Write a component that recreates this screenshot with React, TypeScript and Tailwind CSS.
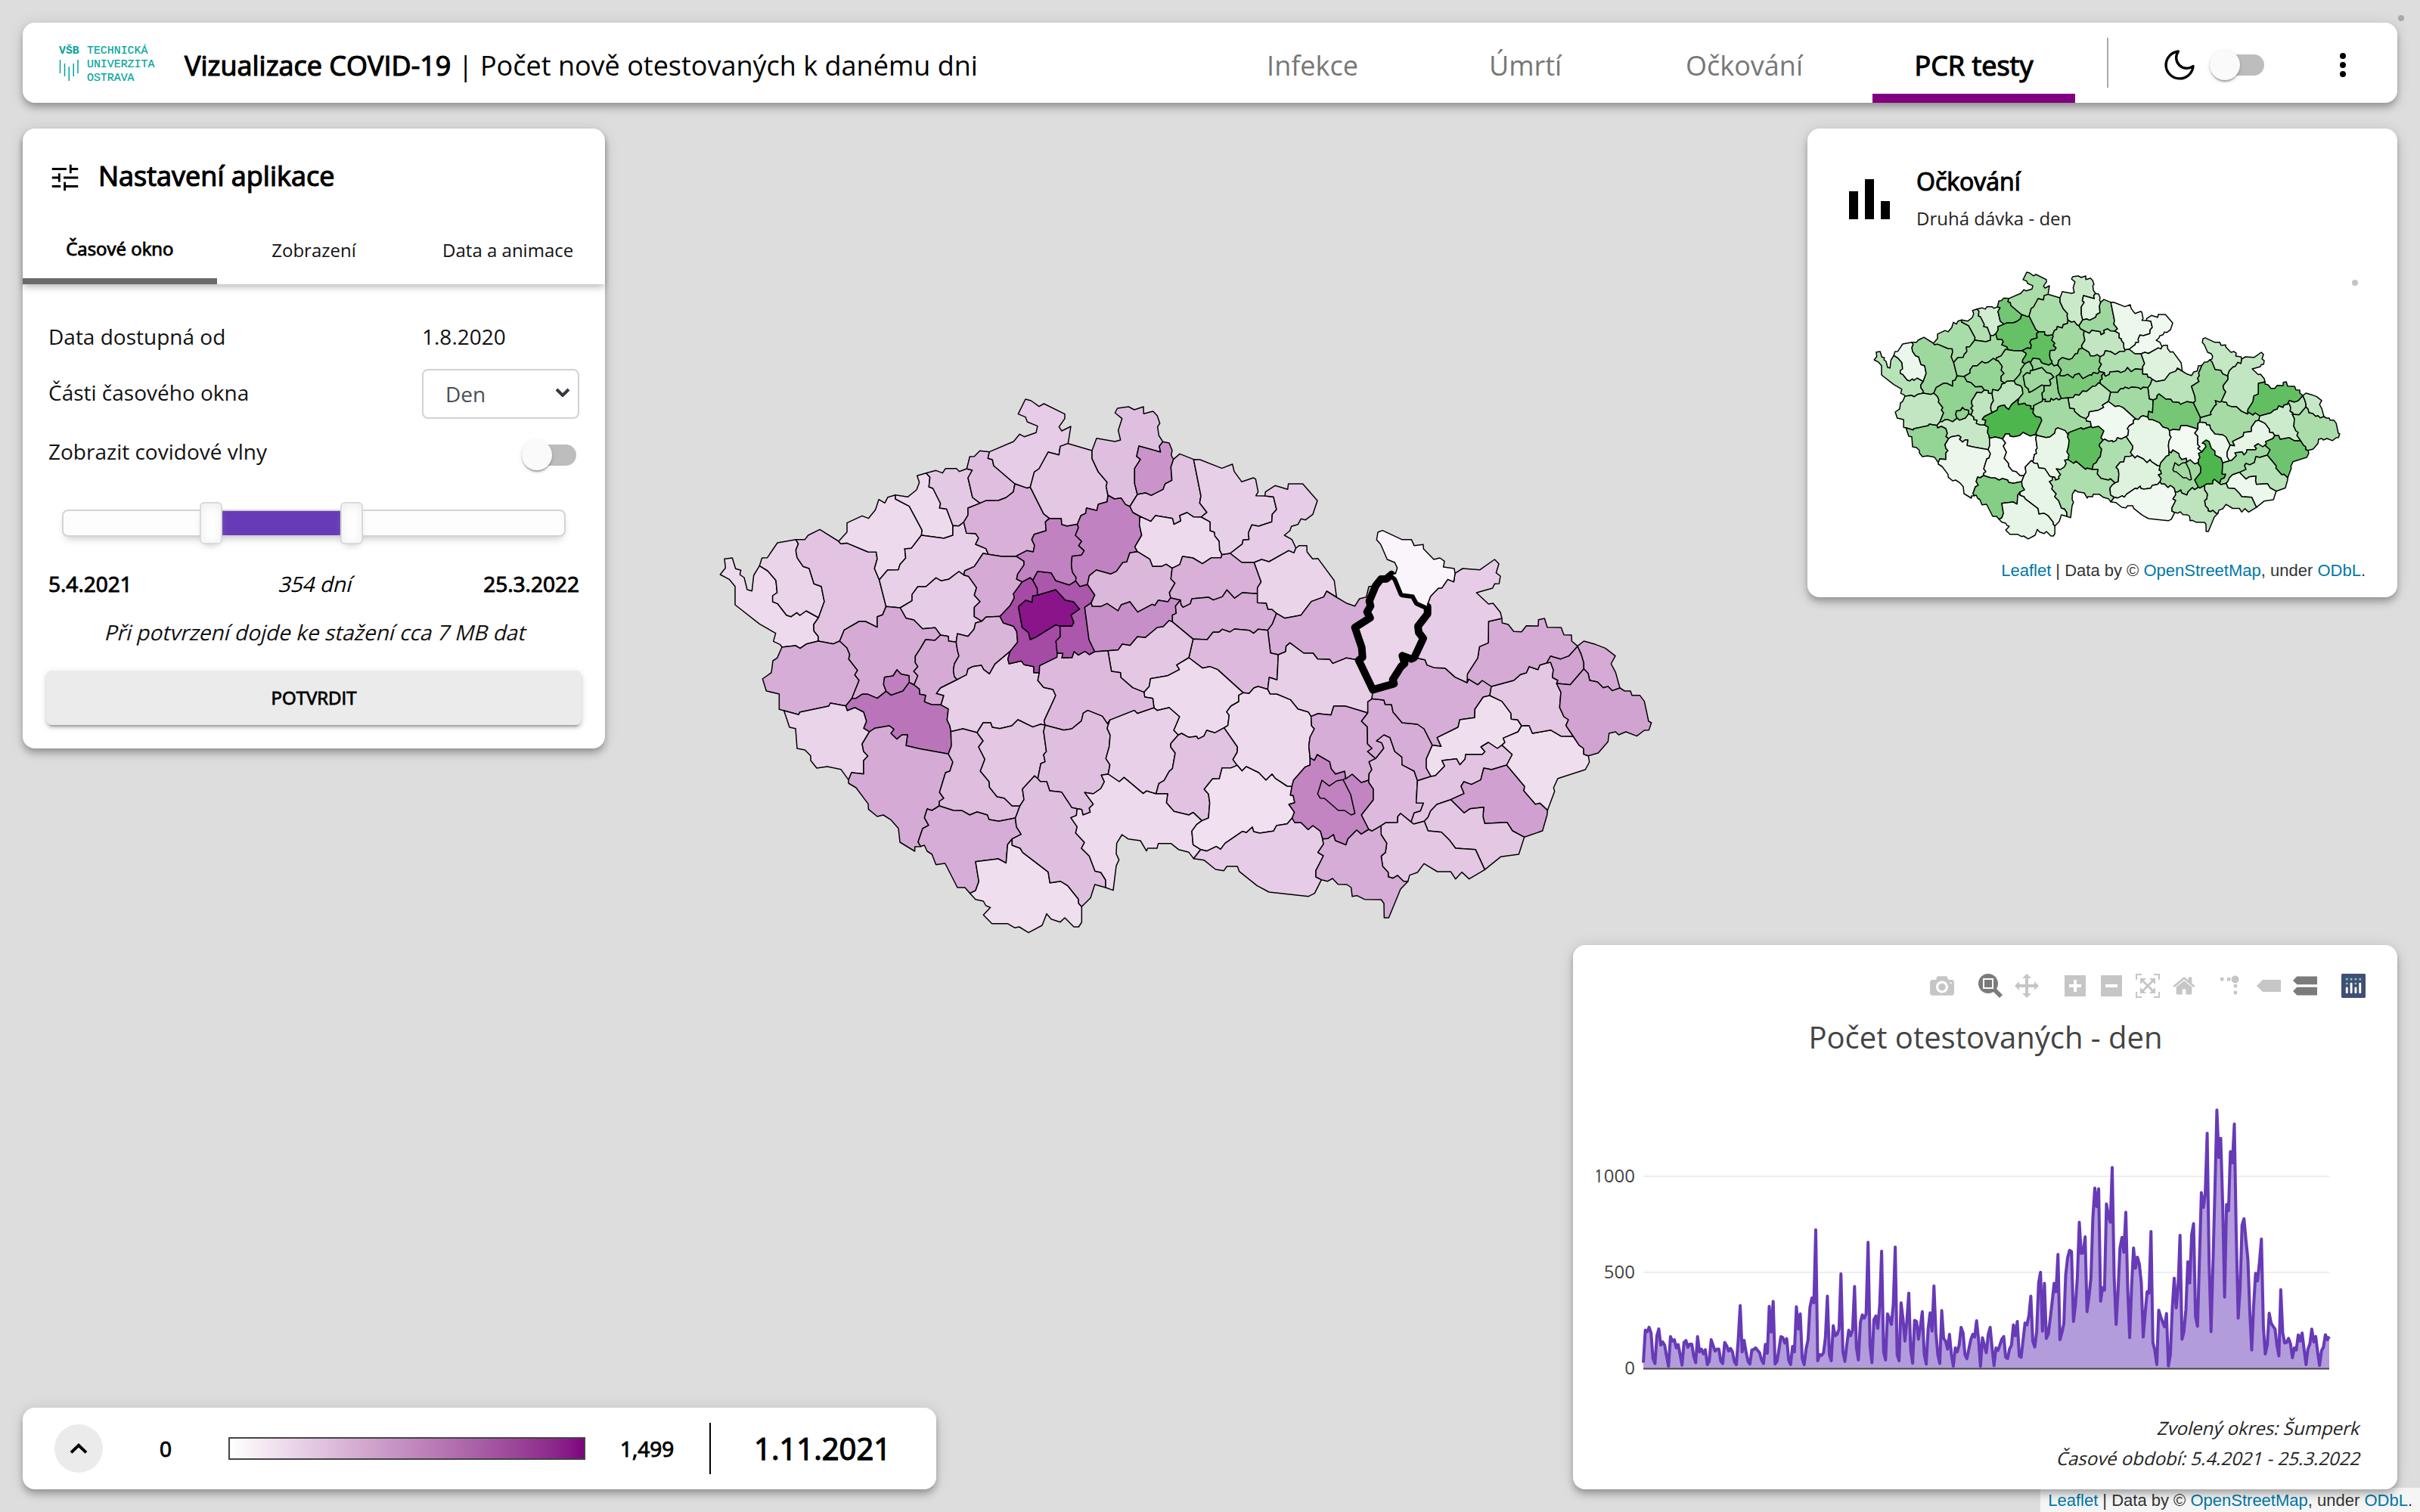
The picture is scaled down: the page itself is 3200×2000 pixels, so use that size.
import type { ReactNode } from "react";

type Point = [number, number];

/* ------------------------------------------------------------------ */
/* District geometry: shared borders, grouped by map sheet             */
/* ------------------------------------------------------------------ */

const SHEET_ORIGIN: Record<string, Point> = {
  a: [0, 0],
  b: [1200, 0],
  c: [2400, 510],
  d: [0, 1110],
  e: [1380, 1050],
};

const BORDERS: Record<string, string> = {
  a1: "193,715 170,753 163,815 144,810 132,762 115,750 119,733 98,727 85,684 54,688 58,724 37,750 73,769 96,797 96,870 193,946 257,983 248,1015 275,1028 282,1038",
  a2: "193,715 225,735 258,773 263,822 245,834 245,858 264,865 300,911 318,917 341,901 353,912 378,894 427,921",
  a3: "193,715 203,684 224,683 264,624 337,611",
  a4: "337,611 347,628 337,653 342,683 366,718 390,726 409,787 438,797 450,857 427,921",
  a5: "427,921 408,948 409,974 426,995 426,1014",
  a6: "282,1038 336,1032 354,1043 380,1025 426,1014",
  a7: "426,1014 486,1025 511,1014",
  a8: "337,611 373,611 386,594 432,571 507,618",
  a9: "507,618 515,628 540,625 623,660 656,661 660,688 649,726 668,771",
  a10: "668,771 695,877",
  a11: "695,877 681,910 660,917 660,959 613,936 588,936 529,970 511,1014",
  a12: "507,618 540,581 540,545 600,517 625,527 653,493 666,452 690,466 702,443 732,434",
  a13: "732,434 732,450 787,479 838,574 835,594",
  a14: "835,594 795,646 769,648 773,684 750,710 744,731 701,732 668,771",
  a15: "732,434 781,442 816,414 827,384 818,358 854,347",
  a16: "854,347 869,364 865,402 881,408 911,468 907,486 935,490 960,556",
  a17: "960,556 960,594 924,606 835,594",
  a18: "854,347 893,337 919,347 931,329 974,329 986,341 1015,330",
  a19: "1015,330 1037,336 1020,366 1038,444 1068,467",
  a20: "1068,467 1020,486 1020,514 1003,542",
  a21: "1003,542 984,557 960,556",
  a22: "1015,330 1027,282 1045,281 1067,259 1105,263",
  a23: "1105,263 1099,289 1117,294 1122,318 1206,390",
  a24: "1206,390 1200,422 1172,444 1141,456 1090,457 1068,467",
  a25: "1003,542 1014,586 1050,587 1062,605 1050,630 1091,647 1101,670",
  a26: "1101,670 1080,666 1045,718 1007,735 1004,752",
  a27: "1004,752 984,738 943,769 914,775 893,763 853,798 821,798 798,829 798,854 751,882",
  a28: "751,882 695,877",
  a29: "1101,670 1153,678 1211,677",
  a30: "1211,677 1242,697 1242,712 1217,748 1213,768 1235,779",
  a31: "1235,779 1200,827 1204,842 1188,872 1147,916",
  a32: "1004,752 1022,757 1054,802 1045,832 1068,857 1045,880 1045,917 1075,935",
  a33: "1075,935 1091,919 1147,916",
  a34: "1075,935 1050,942 1044,967 1020,995 978,985 973,1018",
  a35: "751,882 774,923 805,930 840,965 890,961 911,990",
  a36: "911,990 942,995 943,1014 973,1018",
  a37: "911,990 889,1011 852,1008 830,1045 811,1074 811,1100 821,1115 805,1134 821,1151 806,1187",
  a38: "973,1018 978,1050 984,1073 966,1104 962,1130 966,1155 977,1167",
  a39: "1147,916 1160,942 1200,955 1213,975 1217,1018 1187,1055",
  a40: "977,1167 1014,1148 1020,1125 1039,1115 1073,1110 1082,1127 1105,1144 1127,1105 1187,1055",
  a41: "1187,1055 1178,1085 1183,1104 1232,1093 1243,1108 1281,1115 1281,1139 1303,1139",
  a42: "1105,263 1201,222 1225,193 1243,203 1290,187 1296,161 1255,144 1248,125 1219,113 1248,54 1270,60 1302,83 1321,72 1404,113 1404,131 1381,164 1392,180 1428,162 1417,230",
  b0: "217,230 186,241 181,275 138,264 102,330 83,343 67,403",
  b00: "67,403 54,407 6,390",
  b1: "67,403 120,509 143,527",
  b2: "217,230 312,258",
  b3: "312,258 312,290 337,343 372,384 368,400 375,435",
  b4: "375,435 372,461 337,471 331,496 290,486 287,507 268,516 254,550",
  b5: "254,550 213,557 192,551 190,527 143,527",
  b6: "143,527 127,541 130,576 83,590 73,611 84,634 79,660 53,655 11,677",
  b7: "312,258 330,209 403,222 425,216 416,178 431,131 403,108 413,90 457,84 480,96 516,84 517,112 554,102 571,120 581,150 572,163 577,198 593,223",
  b8: "593,223 579,241 584,264 498,240 489,281 504,293 481,329 481,389 492,432",
  b9: "492,432 462,480",
  b10: "462,480 445,472 427,446 401,450 375,435",
  b11: "593,223 618,228 630,257 626,276 635,293",
  b12: "635,293 625,323 629,376 602,390 594,412 547,436 524,426 492,432",
  b13: "635,293 660,271 715,293",
  b14: "715,293 744,438 739,466 768,503 745,522",
  b15: "745,522 714,521 689,504 660,516 664,537 637,551 631,527 564,516 545,539 502,519",
  b16: "502,519 474,504 462,480",
  b17: "502,519 500,553 509,594 482,640 492,659",
  b18: "715,293 740,294 827,328 869,312 876,341 906,382 952,366 961,371 971,422 962,437 998,438",
  b19: "998,438 1032,442 1044,492 1027,511 1025,541 973,558 946,553 932,585 935,611 911,613 908,629 860,666",
  b20: "745,522 780,541 780,576 797,582 799,597 816,618 818,653 827,671",
  b21: "827,671 860,666",
  b22: "998,438 1000,422 1038,397 1088,412 1091,390 1148,390 1206,457 1188,511 1159,533 1141,529 1129,551 1103,559 1097,576 1075,594 1105,611 1121,645",
  b23: "1121,645 1113,664 1092,655 1014,699 985,690 955,702",
  b24: "860,666 906,702 955,702",
  b25: "1121,645 1134,635 1164,635 1165,660 1187,688 1208,686 1273,774 1282,840",
  b26: "955,702 983,779 968,803 968,826",
  b27: "968,826 968,862 1003,863 1010,887 1026,888 1044,904",
  b28: "1044,904 1076,923 1141,911 1182,857 1231,839 1243,816 1282,840",
  b29: "827,671 824,683 786,683 750,707 712,684 671,678 660,710 630,725",
  b30: "630,725 606,709 587,718 552,718 541,689 492,659",
  b31: "492,659 462,664 450,700 434,702 409,737 386,748 329,732 301,755 294,789",
  b32: "254,550 258,564 246,594 271,618 259,635 281,655 270,673 233,677 230,712 234,740 249,762 247,775",
  b33: "247,775 264,797 294,789",
  b34: "247,775 222,791 168,774 150,743 96,737 77,772",
  b35: "77,772 67,762 35,779",
  b36: "77,772 95,806 95,832",
  b37: "95,832 77,835 74,860 49,852 20,878 35,960 60,980 67,1008 90,998 168,949 185,955",
  b38: "95,832 168,810 206,851 239,858 263,887 229,911 240,940 232,955 185,955",
  b39: "185,955 186,997 169,1014 174,1062",
  b40: "174,1062 173,1078 104,1112 103,1139",
  b41: "174,1062 196,1063 192,1081 233,1080 241,1056 258,1070 284,1055 301,1068 323,1056",
  b42: "323,1056 300,1008 283,880 309,862",
  b43: "309,862 323,831 294,789",
  b44: "309,862 312,876 346,877 372,865 415,894 428,870 462,858 493,899 551,868 561,873 575,852 613,858 624,842",
  b45: "630,725 625,767 641,784 619,822 624,842",
  b46: "624,842 663,851",
  b47: "663,851 665,870 673,880 702,866 708,846 774,840 793,851 829,838 847,811 877,844 908,822 968,826",
  b48: "663,851 643,875 646,904 631,911 631,938",
  b49: "375,1052 416,1049 432,1026 463,1031 492,997 523,1000 571,960 594,957 618,932 631,938",
  b58: "323,1056 375,1052",
  b50: "631,938 713,1006",
  b51: "713,1006 769,1008 792,979 815,979 829,967 859,978 877,966 935,971 953,983 971,967 1009,971",
  b52: "1044,904 1027,947 1009,971",
  b53: "1009,971 1020,1061 1051,1068",
  b54: "1051,1068 1080,1056 1082,1034 1097,1021 1152,1062 1189,1062 1207,1085 1255,1087 1267,1103 1320,1081 1370,1090",
  b55: "1051,1068 1046,1168 1015,1158 1009,1205",
  b56: "713,1006 696,1080",
  e51: "516,30 570,71 599,65 630,77 732,169",
  e1: "516,30 468,59 479,77 433,101 364,113 359,144 338,167",
  e2: "195,2 209,84 245,89 246,108 293,149 338,167",
  e3: "338,167 341,186 373,191 378,229",
  e4: "-54,298 20,317 52,312 90,281 97,250 115,239 173,262 193,292 203,277",
  e5: "203,277 300,239 312,251 378,229",
  e6: "378,229 390,239 438,228 479,264 456,318 474,337",
  e7: "474,337 487,330 516,346 547,342 553,352 576,341 587,318 619,328 656,308",
  e8: "656,308 671,299 676,258 666,245 683,222 714,204 714,179 732,169",
  e9: "732,169 755,172 774,150 791,144 829,155",
  e10: "829,155 838,173 865,174 920,197 949,233 990,245 1001,263",
  e11: "1001,263 1028,252 1080,257 1091,222 1134,221 1226,249",
  e12: "1001,263 1003,300 1014,312 997,345 992,380 997,427",
  e13: "997,427 997,456 977,464 931,517 925,541",
  e14: "656,308 709,384 708,405 691,434 708,457",
  e15: "708,457 727,479 744,462 793,486 822,516 846,492 859,509 906,540 925,541",
  e16: "474,337 445,370 444,384 462,408 451,470 438,481 418,517 397,529 386,570",
  e17: "386,570 432,570 427,605 457,640 516,654 533,644 568,677",
  e18: "568,677 594,666 599,606 594,571 577,552 610,511 637,510 648,467 684,467 708,457",
  e19: "203,277 192,310 204,337 200,384 187,430 203,455 196,492",
  e20: "196,492 240,522 259,505 335,569 348,559 386,570",
  e21: "196,492 169,496 181,522 167,549 137,570 103,565 137,611 121,627 125,643 96,654 91,632 73,629",
  e23: "73,629 70,656 48,665 73,701 67,725 102,763 90,786 121,817 144,877 167,882 186,912 186,942",
  e24: "186,942 216,953 228,856 239,832 228,808 230,766 251,732 275,749 324,756 348,797 353,786 390,786 395,767 445,767 475,791 516,802 535,827",
  e25: "568,677 547,692 528,718 533,772 563,791",
  e26: "563,791 535,827",
  e27: "563,791 588,797 625,779 642,790 660,766 729,719 744,724 768,702 773,720 797,726 852,718 864,696 906,689 926,666",
  e28: "925,541 919,575 930,577 936,605 913,612 935,643 926,666",
  e29: "926,666 936,684 961,684 989,712 1008,696 1038,718 1047,749",
  e30: "1047,749 1050,770 1028,803 1050,816 1020,875 1020,900 1042,911",
  e31: "535,827 576,833 622,870 655,875 667,858 709,858 716,878 786,934 834,960 991,977 1015,965 1042,911",
  e32: "1042,911 1067,917 1086,906 1108,929 1143,930 1160,942 1164,977 1183,974 1213,989 1279,990 1290,1005 1291,1062 1309,1062 1356,948 1385,918",
  e33: "1385,918 1368,917 1344,894 1326,905 1307,899 1307,882 1285,858 1279,817 1296,803 1301,766 1279,732 1278,697",
  e34: "1047,749 1067,748 1090,732 1097,756 1139,773 1147,749 1182,714 1200,730 1230,711",
  e35: "1230,515 1230,525 1248,551 1248,594 1201,654 1230,711",
  e36: "1230,711 1242,718 1278,697",
  e37: "1278,697 1296,685 1344,684 1345,660 1356,648 1398,682",
  e38: "997,427 1014,437 1025,414 1075,443 1081,470 1098,491 1134,480 1139,510 1164,492 1200,525 1230,515",
  e39: "1044,516 1073,539 1102,519 1128,514 1139,508 1128,514 1158,573 1175,648 1160,654 1134,636 1109,636 1054,588 1037,587 1027,570 1044,516",
  e40: "1226,249 1201,282 1224,304 1225,372 1243,390 1225,402 1257,430",
  e41: "1257,430 1231,443 1242,474 1231,491 1230,515",
  e42: "1226,249 1226,205 1243,193",
  e43: "1257,430 1289,389 1281,368 1260,360 1290,336 1314,347 1333,402 1361,424 1362,455 1410,480 1423,518",
  e44: "1243,193 1246,160",
  e50: "91,1018 126,983 143,930 186,942",
  c45: "170,580 226,697",
  c49: "403,1058 398,1146 427,1147 415,1178 390,1186 378,1222",
  c1: "300,240 316,236 323,214 313,192 283,180 257,120 241,102 246,72 264,65 341,101 379,101 390,125 426,121 427,138 468,180 492,174 510,187 506,210 549,216 552,235",
  c2: "552,235 547,269 523,259 500,293 486,294 455,326 443,358 443,368",
  c3: "300,240 318,255 343,316 388,322 403,350 443,368",
  c4: "238,283 258,258 280,257 300,240",
  c5: "82,330 120,353 155,365 173,336 200,329 210,288 238,283",
  c6: "238,283 212,345 217,365 203,388 215,412 155,450 182,530 185,568 170,580",
  c7: "443,368 443,396 405,445 408,470 426,493 390,570",
  c8: "390,570 378,575 343,562 352,593 338,605 305,657 310,673 226,697",
  c9: "390,570 408,573 433,578 441,599 471,610 512,611 552,647 600,669",
  c10: "552,235 582,216 651,221 709,180 726,197 715,233 732,246 727,276 709,277 701,294 637,312 685,357 703,354 732,390 738,414",
  c11: "738,414 685,426 684,511 649,526 642,571 601,635 600,669",
  c12: "738,414 739,432 763,438 785,466 816,467 835,443 882,444 883,419 907,414 918,449 973,450 984,479 1014,480 1015,504 1038,524",
  c13: "600,669 606,655 642,677 660,660 696,684",
  c14: "696,684 785,660 811,637 835,630 846,605 881,617 888,599 915,591",
  c15: "915,591 931,563 971,575 1003,563 1038,524",
  c16: "915,591 931,588 942,618 938,648 960,660 955,672",
  c17: "955,672 1009,677 1063,614",
  c18: "1038,524 1053,557 1063,590 1063,614",
  c19: "1038,524 1063,504 1109,517 1148,532 1188,563 1171,594 1189,628 1206,690",
  c20: "1063,614 1080,632 1086,660 1117,666 1140,689 1159,684 1176,701 1206,690",
  c21: "1206,690 1225,702 1248,702 1254,719 1285,719 1303,743 1320,822 1331,828 1321,857 1303,858 1273,881 1230,864 1201,876 1189,864 1163,870 1159,903 1120,948 1081,959",
  c22: "955,672 972,707 967,767 984,804 1002,816 992,839 1021,882",
  c23: "1021,882 1044,917 1062,930 1063,953 1081,959",
  c24: "696,684 690,720",
  c25: "690,720 738,743 774,791 775,814 800,816 816,840",
  c26: "816,840 846,839 859,870 931,857 972,881 1021,882",
  c27: "690,720 664,726 631,774 630,808 571,816 564,846 481,887 497,922 462,917",
  c28: "222,733 270,738 275,755 300,756 306,785 342,828 403,834 429,852 462,917",
  c29: "462,917 438,972 438,1008 457,1041",
  c30: "457,1041 403,1058",
  c31: "457,1041 474,1038 511,1000 500,978 558,971 571,995 592,972 594,954 660,954 671,943 655,924 684,906 720,930 738,917",
  c32: "738,917 750,906 743,889 802,864 816,840",
  c33: "738,917 779,954 757,996",
  c34: "757,996 697,1014 666,1008 654,1055 617,1073 587,1062 576,1080 588,1109 535,1133",
  c35: "757,996 828,1081 825,1098 871,1151 889,1147 919,1175",
  c36: "1081,959 1085,984 1069,1014 960,1049 943,1086 947,1100 919,1175",
  c40: "378,1222 388,1230 430,1219",
  c41: "430,1219 445,1203 455,1178 480,1152 535,1133",
  c42: "430,1219 445,1257 498,1262 530,1294 554,1326 633,1331 670,1411",
  c43: "919,1175 917,1195 899,1257 827,1282",
  c46: "535,1133 588,1186 612,1169 666,1163 663,1200 670,1228 758,1223 780,1257 827,1282",
  c47: "827,1282 805,1350 733,1360 670,1411",
  c48: "365,1458 372,1433 403,1422 429,1387 482,1419 535,1419 554,1448 579,1421 608,1448 670,1411",
  d1: "282,-72 263,-29 246,-18 240,29 205,54 220,102 271,114 271,175 290,180",
  d2: "511,-96 540,-69 551,-42 547,-25 582,20 571,38 588,60 559,132",
  d3: "559,132 535,161",
  d4: "535,161 474,150 468,162 353,186 348,196 290,180",
  d5: "559,132 576,131 600,115 623,115 660,131 695,103",
  d6: "695,103 685,75 689,47 723,42 738,18 755,35 786,41 787,68",
  d7: "695,103 715,119 762,102 787,68",
  d8: "787,68 806,78",
  d9: "806,78 827,95 828,115 852,119 847,145 876,156 913,157",
  d10: "977,57 911,90 895,112 924,120 913,157",
  d11: "913,157 942,173 937,217 948,240 952,263",
  d12: "952,263 954,320 942,352",
  d13: "942,352 825,331 774,319 780,276 758,276 738,293 714,270 726,254 708,240 650,250 629,264",
  d14: "629,264 606,250 617,222 606,186 571,168 541,180 535,161",
  d15: "629,264 600,312 606,342 623,360 606,378 606,431 558,426 546,455",
  d16: "290,180 312,246 336,251 342,330 373,336 396,359 396,378 420,408 462,402 516,413 546,455",
  d17: "546,455 546,468 576,486 624,550 625,571 660,600 684,594 715,614 744,647 750,702 809,738 809,720 832,719",
  d18: "906,558 877,576 858,570 847,605 864,635 840,648 822,701 832,719",
  d19: "942,352 960,384 948,420 931,426 907,504 924,528 906,540 906,558",
  d20: "906,558 962,576 997,577 1027,594 1056,582 1097,594 1103,612 1142,619 1208,606",
  d21: "952,263 1000,252 1056,267",
  d22: "1056,267 1080,300 1062,324 1087,373 1069,420 1104,462 1105,484 1135,521 1164,527 1195,558 1226,558",
  d23: "1226,558 1208,606",
  d24: "1056,267 1080,228 1110,228 1116,246 1146,251 1194,240 1218,216 1277,245 1308,234 1326,238",
  d25: "1303,29 1297,60 1320,88 1357,96 1368,120 1322,220 1326,238",
  d26: "1326,238 1320,262 1331,342 1320,355 1326,383 1309,390 1297,450",
  d27: "1297,450 1284,439 1236,491 1242,533 1226,558",
  d28: "1208,606 1212,641 1231,671 1195,689",
  d29: "1195,689 1177,712 1171,785 1140,768 1050,779 1063,858 1050,894 1028,905",
  d30: "1195,689 1195,714 1227,726 1237,743 1338,820 1345,863 1387,857 1416,875 1458,928 1459,945 1471,958",
  d31: "832,719 847,714 858,738 877,750 893,791 929,786 978,882 1008,882 1028,905",
  d32: "1028,905 1050,929 1081,936 1091,954 1109,961 1081,991 1115,1025 1177,1025 1206,1042 1223,1038 1260,1061 1314,1032 1332,986 1350,1007 1386,1019 1404,1002 1440,1038 1459,1038 1471,1020 1471,958",
  d34: "1453,569 1432,565 1391,503 1344,498 1332,461 1307,461 1297,450",
};

/* name, borders round the district, PCR tests (0..1), second dose (0..1) */
const DISTRICTS: [string, string, number, number][] = [
  ["Cheb", "a1 a6 a5 a2", 0.14, 0.28],
  ["Sokolov", "a3 a4 a2", 0.17, 0.08],
  ["Karlovy Vary", "a8 a9 a10 a11 a7 a5 a4", 0.23, 0.38],
  ["Chomutov", "a12 a13 a14 a9", 0.145, 0.34],
  ["Most", "a15 a16 a17 a13", 0.14, 0.31],
  ["Teplice", "a18 a19 a20 a21 a16", 0.21, 0.18],
  ["Ústí nad Labem", "a22 a23 a24 a19", 0.25, 0.55],
  ["Děčín", "a42 b0 b00 a23", 0.2, 0.34],
  ["Louny", "a14 a17 a21 a25 a26 a27 a28 a10", 0.18, 0.36],
  ["Litoměřice", "a20 a25 a29 b6 b1 b00 a24", 0.31, 0.6],
  ["Rakovník", "a27 a32 a34 a36 a35", 0.2, 0.42],
  ["Kladno", "a29 a30 a31 a33 a32 a26", 0.33, 0.37],
  ["Tachov", "a6 a7 d2 d3 d4 d1", 0.32, 0.24],
  ["Plzeň-sever", "a11 a28 a35 a37 d8 d6 d5 d2", 0.33, 0.43],
  ["Plzeň-město", "d6 d7", 0.5, 0.43],
  ["Rokycany", "a36 a38 d10 d9 a37", 0.33, 0.25],
  ["Beroun", "a33 a39 a40 a38 a34", 0.29, 0.26],
  ["Plzeň-jih", "d5 d7 d8 d9 d11 d12 d13 d14 d3", 0.54, 0.22],
  ["Domažlice", "d4 d14 d15 d16", 0.17, 0.42],
  ["Klatovy", "d15 d13 d19 d18 d17", 0.33, 0.08],
  ["Příbram", "d10 a40 a41 d25 d24 d21 d11", 0.19, 0.7],
  ["Praha-západ", "a31 a39 a41 b40 b39 b37 b36 b35", 0.71, 0.42],
  ["Praha", "b37 b38", 0.92, 0.38],
  ["Praha-východ", "b34 b36 b38 b39 b41 b42 b43 b33", 0.66, 0.42],
  ["Mělník", "b6 b5 b32 b34 b35 a30", 0.49, 0.62],
  ["Česká Lípa", "b0 b2 b3 b4 b5 b1", 0.22, 0.34],
  ["Liberec", "b7 b8 b9 b10 b3", 0.25, 0.21],
  ["Jablonec nad Nisou", "b11 b12 b8", 0.42, 0.13],
  ["Semily", "b13 b14 b15 b16 b9 b12", 0.24, 0.38],
  ["Trutnov", "b18 b19 b21 b20 b14", 0.19, 0.07],
  ["Náchod", "b22 b23 b24 b19", 0.2, 0.06],
  ["Mladá Boleslav", "b10 b16 b17 b31 b33 b32 b4", 0.49, 0.37],
  ["Jičín", "b15 b20 b29 b30 b17", 0.145, 0.24],
  ["Nymburk", "b30 b45 b44 b43 b31", 0.28, 0.46],
  ["Kolín", "b44 b46 b48 b49 b58 b42", 0.44, 0.53],
  ["Hradec Králové", "b29 b21 b24 b26 b47 b46 b45", 0.31, 0.31],
  ["Pardubice", "b47 b27 b52 b51 b50 b48", 0.32, 0.41],
  ["Rychnov nad Kněžnou", "b23 b25 b28 b27 b26", 0.17, 0.13],
  ["Ústí nad Orlicí", "b28 c5 c6 b54 b53 b52", 0.32, 0.27],
  ["Chrudim", "b51 b53 b55 e9 e51 b56", 0.27, 0.36],
  ["Kutná Hora", "b49 b50 b56 e1 e2", 0.22, 0.27],
  ["Havlíčkův Brod", "e1 e51 e8 e7 e6 e3", 0.14, 0.06],
  ["Benešov", "d25 b40 b41 b58 e2 e3 e5 e4", 0.27, 0.36],
  ["Strakonice", "d21 d22 d23 d20 d19 d12", 0.26, 0.06],
  ["Písek", "d22 d24 d26 d27", 0.22, 0],
  ["Tábor", "d26 e4 e19 e21 d34", 0.25, 0.09],
  ["Pelhřimov", "e5 e6 e16 e20 e19", 0.18, 0.63],
  ["Jihlava", "e7 e14 e18 e17 e16", 0.24, 0.32],
  ["Žďár nad Sázavou", "e9 e10 e12 e13 e15 e14 e8", 0.145, 0.1],
  ["Svitavy", "b55 b54 c45 e44 e42 e11 e10", 0.19, 0.54],
  ["Prachatice", "d20 d28 d29 d31 d18", 0.32, 0.48],
  ["Český Krumlov", "d30 d32 d29", 0.13, 0.1],
  ["České Budějovice", "d27 d34 e23 e50 d30 d28 d23", 0.25, 0.1],
  ["Jindřichův Hradec", "e21 e20 e17 e25 e26 e24 e23", 0.145, 0.32],
  ["Třebíč", "e18 e15 e28 e27 e25", 0.12, 0.13],
  ["Znojmo", "e27 e29 e30 e31 e26", 0.2, 0.06],
  ["Brno-venkov", "e38 e35 e34 e29 e28 e13", 0.48, 0.37],
  ["Brno-město", "e39", 0.49, 0.37],
  ["Blansko", "e11 e40 e41 e38 e12", 0.32, 0.05],
  ["Vyškov", "e43 c49 e37 e36 e35 e41", 0.27, 0.7],
  ["Prostějov", "e42 c28 c29 c30 e43 e40", 0.32, 0.08],
  ["Olomouc", "c8 c9 c13 c24 c27 c28 e44", 0.32, 0.35],
  ["Přerov", "c27 c25 c32 c31 c29", 0.13, 0.1],
  ["Kroměříž", "c31 c33 c34 c41 c40 c49 c30", 0.23, 0.38],
  ["Zlín", "c35 c43 c46 c34", 0.37, 0.28],
  ["Vsetín", "c26 c23 c36 c35 c33 c32", 0.13, 0.57],
  ["Uherské Hradiště", "c41 c46 c47 c42", 0.22, 0.07],
  ["Hodonín", "c40 c42 c48 e33 e37", 0.22, 0.26],
  ["Břeclav", "e36 e33 e32 e30 e34", 0.32, 0.26],
  ["Nový Jičín", "c14 c16 c22 c26 c25 c24", 0.22, 0.2],
  ["Ostrava", "c15 c18 c17 c16", 0.36, 0.28],
  ["Karviná", "c19 c20 c18", 0.33, 0.22],
  ["Frýdek-Místek", "c20 c21 c23 c22 c17", 0.36, 0.33],
  ["Opava", "c12 c15 c14 c13 c11", 0.33, 0.62],
  ["Bruntál", "c10 c11 c9 c7 c2", 0.2, 0.24],
  ["Šumperk", "c4 c3 c7 c8 c45 c6", 0.165, 0.41],
  ["Jeseník", "c1 c2 c3", 0.04, 0.23],
];

const borderPoints = (id: string): Point[] => {
  const [dx, dy] = SHEET_ORIGIN[id[0]];
  return BORDERS[id].split(" ").map((pair) => {
    const [x, y] = pair.split(",").map(Number);
    return [x + dx, y + dy];
  });
};

const gap = (p: Point, q: Point) => Math.hypot(p[0] - q[0], p[1] - q[1]);

/* Joins borders end to end, turning each one to meet the previous. */
const ringPath = (ids: string) => {
  const lines = ids.split(" ").map(borderPoints);
  let ring = [...lines[0]];
  if (lines.length > 1) {
    const next = lines[1];
    const reach = (p: Point) => Math.min(gap(p, next[0]), gap(p, next[next.length - 1]));
    if (reach(ring[0]) < reach(ring[ring.length - 1])) ring.reverse();
  }
  for (const line of lines.slice(1)) {
    const end = ring[ring.length - 1];
    const turned = gap(end, line[0]) <= gap(end, line[line.length - 1]) ? line : [...line].reverse();
    ring = ring.concat(turned.slice(1));
  }
  return "M" + ring.map((p) => p.join(",")).join("L") + "Z";
};

const SHAPES = DISTRICTS.map(([name, ids, tests, dose]) => ({ name, d: ringPath(ids), tests, dose }));

const mix = (target: number[], t: number) =>
  `rgb(${target.map((c) => Math.round(255 - (255 - c) * t)).join(",")})`;

function DistrictMap({ layer, selected, className }: { layer: "tests" | "dose"; selected?: string; className: string }) {
  const target = layer === "tests" ? [128, 0, 128] : [0, 152, 0];
  return (
    <svg viewBox="0 0 3750 2190" className={className}>
      {SHAPES.map((s) => (
        <path
          key={s.name}
          d={s.d}
          fill={mix(target, s[layer])}
          stroke="#000"
          strokeWidth={s.name === selected ? 10 : 1.5}
          strokeLinejoin="round"
          vectorEffect="non-scaling-stroke"
        />
      ))}
    </svg>
  );
}

/* ------------------------------------------------------------------ */
/* Small shared pieces                                                 */
/* ------------------------------------------------------------------ */

const CARD =
  "rounded-2xl bg-white shadow-[0_4px_8px_-2px_rgba(0,0,0,0.2),0_8px_10px_rgba(0,0,0,0.14),0_2px_20px_rgba(0,0,0,0.12)]";

function Toggle() {
  return (
    <div className="relative h-7 w-[72px] rounded-full bg-[#bdbdbd]">
      <div className="absolute -top-1.5 left-0 size-10 rounded-full bg-[#fafafa] shadow-[0_4px_2px_-2px_rgba(0,0,0,0.2),0_2px_2px_rgba(0,0,0,0.14),0_2px_6px_rgba(0,0,0,0.12)]" />
    </div>
  );
}

function Slanted({ children }: { children: ReactNode }) {
  return <span className="inline-block origin-[50%_78%] -skew-x-[14deg] whitespace-nowrap">{children}</span>;
}

function Attribution() {
  return (
    <span className="font-['Liberation_Sans',Arial,sans-serif] text-[22px] leading-[26px] whitespace-nowrap text-[#333]">
      <span className="text-[#0078a8]">Leaflet</span> | Data by © <span className="text-[#0078a8]">OpenStreetMap</span>, under{" "}
      <span className="text-[#0078a8]">ODbL</span>.
    </span>
  );
}

function Logo() {
  return (
    <svg viewBox="0 0 128 56" className="h-14 w-32 shrink-0" fill="#00a499" fontFamily="'Liberation Mono', monospace" fontSize="14.9">
      <text x="0" y="15.7" fontWeight="700">VŠB</text>
      <text x="37" y="15.7" stroke="#00a499" strokeWidth="0.2">TECHNICKÁ</text>
      <text x="37" y="33.7" stroke="#00a499" strokeWidth="0.2">UNIVERZITA</text>
      <text x="37" y="52" stroke="#00a499" strokeWidth="0.2">OSTRAVA</text>
      <g stroke="#00a499" strokeWidth="1.5">
        <path d="M1.5 24v18M7.5 29v17M13.3 33v19M19.2 29v17M25 24v18" />
      </g>
    </svg>
  );
}

/* ------------------------------------------------------------------ */
/* Header                                                              */
/* ------------------------------------------------------------------ */

function Header() {
  return (
    <header className={`${CARD} flex h-[106px] items-center overflow-visible pr-12 pl-12 text-4xl`}>
      <Logo />
      <h1 className="ml-[38px] pt-2 leading-none whitespace-pre">
        <span className="[-webkit-text-stroke:1.2px_#000]">Vizualizace COVID-19</span> | Počet nově otestovaných k danému dni
      </h1>
      <nav className="ml-auto flex h-full items-center text-[#777]">
        <a className="w-[323px] pt-2 text-center leading-none">Infekce</a>
        <a className="w-[240px] pt-2 text-center leading-none">Úmrtí</a>
        <a className="w-[339px] pt-2 text-center leading-none">Očkování</a>
        <a className="flex h-full w-[268px] items-center justify-center border-b-[12px] border-[#800080] pt-5 leading-none text-black [-webkit-text-stroke:1.2px_#000]">
          PCR testy
        </a>
      </nav>
      <div className="ml-[42px] h-[66px] w-0.5 bg-[#aaa]" />
      <svg viewBox="0 0 24 24" className="mt-1.5 ml-[70px] size-12" fill="none" stroke="#000" strokeWidth="1.7" strokeLinejoin="round">
        <path d="M21 12.79A9 9 0 1 1 11.21 3 7 7 0 0 0 21 12.79z" />
      </svg>
      <div className="mt-1.5 ml-4">
        <Toggle />
      </div>
      <svg viewBox="0 0 24 24" className="mt-1.5 ml-20 size-12">
        <circle cx="12" cy="6" r="2" />
        <circle cx="12" cy="12" r="2" />
        <circle cx="12" cy="18" r="2" />
      </svg>
    </header>
  );
}

/* ------------------------------------------------------------------ */
/* Settings                                                            */
/* ------------------------------------------------------------------ */

function Settings() {
  return (
    <section className={`${CARD} h-[820px] w-[770px] text-[28px] text-[#111]`}>
      <div className="flex h-[206px] flex-col rounded-t-2xl shadow-[0_4px_8px_-2px_rgba(0,0,0,0.2),0_6px_10px_rgba(0,0,0,0.1)]">
        <div className="flex items-center pt-[38px] pl-[33px] text-black">
          <svg viewBox="0 0 24 24" className="mt-1 size-[46px]" fill="none" stroke="#000" strokeWidth="1.5">
            <path d="M3 6h10M15.8 3v6M15.8 6H21M3 12h5M8 9v6M11 12h10M3 18h6M11.8 15v6M11.8 18H21" />
          </svg>
          <h2 className="ml-[21px] text-4xl leading-[50px] [-webkit-text-stroke:1.2px_#000]">Nastavení aplikace</h2>
        </div>
        <div className="mt-auto grid h-[86px] grid-cols-3 text-center text-2xl leading-[78px]">
          <div className="border-b-8 border-[#6b6b6b] text-black [-webkit-text-stroke:0.9px_#000]">Časové okno</div>
          <div className="pt-0.5">Zobrazení</div>
          <div className="pt-0.5">Data a animace</div>
        </div>
      </div>
      <div className="flex flex-col px-[34px] pt-[50px]">
        <div className="flex h-[38px] items-center justify-between">
          <span>Data dostupná od</span>
          <span className="w-[208px]">1.8.2020</span>
        </div>
        <div className="mt-6 flex h-[66px] items-center justify-between">
          <span className="-mt-1">Části časového okna</span>
          <div className="flex h-[66px] w-[208px] items-center justify-between rounded-lg border-2 border-[#d2d2d2] pr-2.5 pl-[29px] text-[#495057]">
            Den
            <svg viewBox="0 0 20 12" className="-mt-1 h-3 w-5" fill="none" stroke="#343a40" strokeWidth="4">
              <path d="M2 2l8 8 8-8" />
            </svg>
          </div>
        </div>
        <div className="mt-6 flex h-12 items-center justify-between pr-1">
          <span className="-mt-2.5">Zobrazit covidové vlny</span>
          <Toggle />
        </div>
        <div className="relative mx-[18px] mt-12 h-9 rounded-lg border-2 border-[#d3d3d3] bg-[#fdfdfd] shadow-[0_6px_12px_-5px_#bbb]">
          <div className="absolute top-0 left-[194px] h-8 w-[186px] bg-[#673ab7]" />
          <div className="absolute -top-3 left-[180px] h-14 w-[30px] rounded-md border-2 border-[#d9d9d9] bg-white shadow-[inset_0_0_2px_#fff,inset_0_2px_14px_#ebebeb,0_6px_12px_-6px_#bbb]" />
          <div className="absolute -top-3 left-[366px] h-14 w-[30px] rounded-md border-2 border-[#d9d9d9] bg-white shadow-[inset_0_0_2px_#fff,inset_0_2px_14px_#ebebeb,0_6px_12px_-6px_#bbb]" />
        </div>
        <div className="mt-[41px] grid h-[38px] grid-cols-3 items-center text-black">
          <span className="[-webkit-text-stroke:1px_#000]">5.4.2021</span>
          <span className="text-center">
            <Slanted>354 dní</Slanted>
          </span>
          <span className="text-right [-webkit-text-stroke:1px_#000]">25.3.2022</span>
        </div>
        <div className="mt-7 flex h-[38px] items-center justify-center">
          <Slanted>Při potvrzení dojde ke stažení cca 7 MB dat</Slanted>
        </div>
        <button className="-mx-[3px] mt-8 h-[72px] rounded-lg bg-[#ebebeb] text-2xl text-black shadow-[0_6px_2px_-4px_rgba(0,0,0,0.2),0_4px_4px_rgba(0,0,0,0.14),0_2px_10px_rgba(0,0,0,0.12)] [-webkit-text-stroke:0.9px_#000]">
          POTVRDIT
        </button>
      </div>
    </section>
  );
}

/* ------------------------------------------------------------------ */
/* Legend                                                              */
/* ------------------------------------------------------------------ */

function Legend() {
  return (
    <section className={`${CARD} flex h-[108px] w-[1208px] items-center pl-[42px] text-[28px] text-black`}>
      <div className="flex size-16 items-center justify-center rounded-full bg-[#ebebeb]">
        <svg viewBox="0 0 24 14" className="h-3.5 w-6" fill="none" stroke="#000" strokeWidth="4">
          <path d="M2 12.4L12 2.8l10 9.6" />
        </svg>
      </div>
      <span className="ml-[75px] [-webkit-text-stroke:1px_#000]">0</span>
      <div className="ml-[75px] h-[30px] w-[472px] border-2 border-[#444] bg-linear-to-r from-white to-[#800080]" />
      <span className="ml-[46px] w-[118px] [-webkit-text-stroke:1px_#000]">1,499</span>
      <div className="h-[68px] w-0.5 bg-black" />
      <span className="ml-[57px] text-[40px] leading-none [-webkit-text-stroke:1.25px_#000]">1.11.2021</span>
    </section>
  );
}

/* ------------------------------------------------------------------ */
/* Vaccination preview                                                 */
/* ------------------------------------------------------------------ */

function VaccinationCard() {
  return (
    <section className={`${CARD} relative h-[620px] w-[780px]`}>
      <div className="flex pt-12 pl-[55px]">
        <svg viewBox="0 0 54 53" className="mt-[19px] h-[53px] w-[54px]">
          <path d="M0 16h12v37H0zM21 0h12v53H21zM42 29h12v24H42z" />
        </svg>
        <div className="ml-[35px]">
          <h3 className="text-[32px] leading-[44px] text-black [-webkit-text-stroke:1.1px_#000]">Očkování</h3>
          <p className="mt-2.5 text-2xl leading-[34px] text-[#222]">Druhá dávka - den</p>
        </div>
      </div>
      <DistrictMap layer="dose" className="mt-[45px] ml-[82px] h-[365px] w-[625px]" />
      <div className="mt-[26px] mr-[42px] flex justify-end">
        <Attribution />
      </div>
      <div className="absolute top-[200px] left-[720px] size-2 rounded-full bg-[#c4c4c4]" />
    </section>
  );
}

/* ------------------------------------------------------------------ */
/* Chart                                                               */
/* ------------------------------------------------------------------ */

/* One row per week; depth below the top of the plot, 1036 is zero, 680 is 500 tests. */
const DAILY = `
1015 895 900 884 905 1000 1018
915 890 950 938 950 990 1028
918 935 930 960 948 985 1024
940 933 958 946 946 990 1015
918 975 965 982 967 1022 1010
930 950 972 965 965 1010 1018
940 952 972 962 975 1012 1022
930 804 975 932 975 1010 1020
968 966 960 970 978 1005 1018
947 980 806 902 788 1020 1010
965 918 922 942 926 1005 1022
955 975 808 890 834 1000 1022
965 930 810 775 793 523 1008
985 988 978 920 769 985 1008
878 915 910 890 686 975 1010
950 895 915 895 733 960 1005
865 838 850 835 569 955 1015
855 842 888 800 602 975 1005
834 850 873 800 587 985 1008
793 850 935 860 757 970 1017
858 862 928 880 826 985 1020
890 830 898 731 905 985 1018
822 925 935 965 910 985 1028
960 975 950 884 905 985 1000
965 930 910 920 860 930 1028
923 950 978 910 884 960 1026
960 970 950 928 918 995 1000
965 950 875 915 862 990 995
930 868 875 840 769 935 957
900 720 680 898 721 925 910
850 790 721 752 614 930 905
872 690 625 599 603 862 800
700 495 610 608 549 826 770
700 480 368 437 371 787 737
746 427 470 495 292 700 873
750 590 551 606 458 740 922
730 590 665 624 650 720 920
830 752 757 529 940 970 1022
820 845 865 882 833 1027 985
810 702 812 730 543 928 900
820 641 720 540 500 845 880
640 385 440 390 165 640 900
640 380 79 255 184 430 772
429 452 233 275 131 540 850
740 505 482 560 630 830 968
800 684 712 640 557 880 983
950 832 868 880 890 950 990
745 905 942 940 925 945 997
960 968 912 935 905 965 1022
965 945 890 938 918 975 1025
970 958 911 930 918`
  .trim()
  .split(/\s+/)
  .map(Number);

const LEFT = 93;
const ZERO = 370.5;
const PLOT_WIDTH = 907;
const LINE = DAILY.map((v, i) => `${(LEFT + (i * PLOT_WIDTH) / (DAILY.length - 1)).toFixed(1)},${(v / 2.8).toFixed(1)}`).join("L");

function Chart() {
  return (
    <svg viewBox="0 0 1090 410" className="mt-10 h-[410px] w-[1090px]">
      <clipPath id="chart-area">
        <rect x="31" y="0" width="1059" height="410" />
      </clipPath>
      <path d={`M${LEFT} 116H1000M${LEFT} 243H1000`} stroke="#eee" strokeWidth="2" />
      <path d={`M${LINE}L1000,${ZERO}L${LEFT},${ZERO}Z`} fill="#673ab7" fillOpacity="0.5" />
      <path d={`M${LINE}`} fill="none" stroke="#673ab7" strokeWidth="4" strokeLinejoin="round" />
      <path d={`M${LEFT} ${ZERO}H1000`} stroke="#444" strokeWidth="2" />
      <g fill="#444" fontSize="24" textAnchor="end" clipPath="url(#chart-area)">
        <text x="82" y="124">1000</text>
        <text x="82" y="251">500</text>
        <text x="82" y="378">0</text>
      </g>
    </svg>
  );
}

function ModeIcon({ d, w = 1000, active, className, matrix = "matrix(1 0 0 -1 0 850)" }: { d: string; w?: number; active?: boolean; className: string; matrix?: string }) {
  return (
    <svg viewBox={`0 0 ${w} 1000`} className={`h-8 ${className}`} fill={active ? "#7b7b7b" : "#c6c6c6"}>
      <path d={d} transform={matrix} />
    </svg>
  );
}

function ModeBar() {
  return (
    <div className="flex h-8 pl-[472px]">
      <ModeIcon className="w-8" d="m500 450c-83 0-150-67-150-150 0-83 67-150 150-150 83 0 150 67 150 150 0 83-67 150-150 150z m400 150h-120c-16 0-34 13-39 29l-31 93c-6 15-23 28-40 28h-340c-16 0-34-13-39-28l-31-94c-6-15-23-28-40-28h-120c-55 0-100-45-100-100v-450c0-55 45-100 100-100h800c55 0 100 45 100 100v450c0 55-45 100-100 100z m-400-550c-138 0-250 112-250 250 0 138 112 250 250 250 138 0 250-112 250-250 0-138-112-250-250-250z m365 380c-19 0-35 16-35 35 0 19 16 35 35 35 19 0 35-16 35-35 0-19-16-35-35-35z" />
      <ModeIcon active className="ml-8 w-8" d="m1000-25l-250 251c40 63 63 138 63 218 0 224-182 406-407 406-224 0-406-182-406-406s183-406 407-406c80 0 155 22 218 62l250-250 125 125z m-812 250l0 438 437 0 0-438-437 0z m62 375l313 0 0-312-313 0 0 312z" />
      <ModeIcon className="ml-4 w-8" d="m1000 350l-187 188 0-125-250 0 0 250 125 0-188 187-187-187 125 0 0-250-250 0 0 125-188-188 186-187 0 125 252 0 0-250-125 0 187-188 188 188-125 0 0 250 250 0 0-126 187 188z" />
      <ModeIcon className="ml-[34px] w-7" w={875} d="m1 787l0-875 875 0 0 875-875 0z m687-500l-187 0 0-187-125 0 0 187-188 0 0 125 188 0 0 187 125 0 0-187 187 0 0-125z" />
      <ModeIcon className="ml-5 w-7" w={875} d="m0 788l0-876 875 0 0 876-875 0z m688-500l-500 0 0 125 500 0 0-125z" />
      <ModeIcon className="ml-[18px] w-8" d="m250 850l-187 0-63 0 0-62 0-188 63 0 0 188 187 0 0 62z m688 0l-188 0 0-62 188 0 0-188 62 0 0 188 0 62-62 0z m-875-938l0 188-63 0 0-188 0-62 63 0 187 0 0 62-187 0z m875 188l0-188-188 0 0-62 188 0 62 0 0 62 0 188-62 0z m-125 188l-1 0-93-94-156 156 156 156 92-93 2 0 0 250-250 0 0-2 93-92-156-156-156 156 94 92 0 2-250 0 0-250 0 0 93 93 157-156-157-156-93 94 0 0 0-250 250 0 0 0-94 93 156 157 156-157-93-93 0 0 250 0 0 250z" />
      <ModeIcon className="ml-[17px] w-[30px]" w={928.6} d="m786 296v-267q0-15-11-26t-25-10h-214v214h-143v-214h-214q-15 0-25 10t-11 26v267q0 1 0 2t0 2l321 264 321-264q1-1 1-4z m124 39l-34-41q-5-5-12-6h-2q-7 0-12 3l-386 322-386-322q-7-4-13-4-7 2-12 7l-35 41q-4 5-3 13t6 12l401 334q18 15 42 15t43-15l136-114v109q0 8 5 13t13 5h107q8 0 13-5t5-13v-227l122-102q5-5 6-12t-4-13z" />
      <ModeIcon className="ml-[33px] w-8" matrix="matrix(1.5 0 0 -1.5 0 850)" d="M512 409c0-57-46-104-103-104-57 0-104 47-104 104 0 57 47 103 104 103 57 0 103-46 103-103z m-327-39l92 0 0 92-92 0z m-185 0l92 0 0 92-92 0z m370-186l92 0 0 93-92 0z m0-184l92 0 0 92-92 0z" />
      <ModeIcon className="ml-4 w-8" w={1500} d="m375 725l0 0-375-375 375-374 0-1 1125 0 0 750-1125 0z" />
      <ModeIcon active className="ml-4 w-8" w={1125} d="m187 786l0 2-187-188 188-187 0 0 937 0 0 373-938 0z m0-499l0 1-187-188 188-188 0 0 937 0 0 376-938-1z" />
      <svg viewBox="0 0 132 132" className="ml-8 size-8">
        <rect width="132" height="132" rx="6" fill="#3f4f75" />
        <g fill="#80cfbe">
          <circle cx="78" cy="54" r="6" />
          <circle cx="102" cy="30" r="6" />
          <circle cx="78" cy="30" r="6" />
          <circle cx="54" cy="30" r="6" />
          <circle cx="30" cy="30" r="6" />
          <circle cx="30" cy="54" r="6" />
        </g>
        <g fill="#fff">
          <rect x="24" y="72" width="12" height="36" rx="6" />
          <rect x="72" y="72" width="12" height="36" rx="6" />
          <rect x="48" y="48" width="12" height="60" rx="6" />
          <rect x="96" y="48" width="12" height="60" rx="6" />
        </g>
      </svg>
    </div>
  );
}

function ChartCard() {
  return (
    <section className={`${CARD} h-[720px] w-[1090px] pt-[38px]`}>
      <ModeBar />
      <h3 className="mt-6 ml-[92px] w-[907px] text-center text-[40px] leading-[56px] text-[#444]">Počet otestovaných - den</h3>
      <Chart />
      <div className="mt-[19px] flex flex-col items-end pr-[51px] text-2xl leading-[40px] text-[#222]">
        <Slanted>Zvolený okres: Šumperk</Slanted>
        <Slanted>Časové období: 5.4.2021 - 25.3.2022</Slanted>
      </div>
    </section>
  );
}

export default function App() {
  return (
    <div className="relative flex h-[2000px] w-[3200px] flex-col overflow-hidden bg-[#ddd] p-[30px] font-['Open_Sans','Noto_Sans',sans-serif] text-black">
      <DistrictMap layer="tests" selected="Šumperk" className="absolute top-[510px] left-[940px] h-[730px] w-[1250px]" />
      <div className="absolute right-0 bottom-0 flex h-8 items-center bg-white/70 pt-0.5 pr-2.5 pl-2.5">
        <Attribution />
      </div>
      <div className="relative z-10">
        <Header />
      </div>
      <main className="relative mt-[34px] flex flex-1 justify-between">
        <div className="flex flex-col justify-between">
          <Settings />
          <Legend />
        </div>
        <div className="flex flex-col items-end justify-between">
          <VaccinationCard />
          <ChartCard />
        </div>
      </main>
      <div className="absolute top-5 right-[21px] size-2 rounded-full bg-[#aaa]" />
    </div>
  );
}
